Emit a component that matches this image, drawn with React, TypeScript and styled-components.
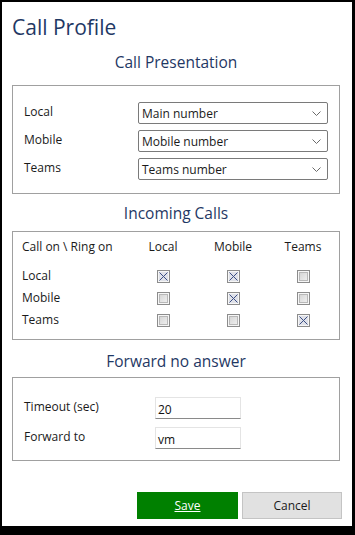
import React from "react";
import styled, { createGlobalStyle } from "styled-components";

const GlobalStyle = createGlobalStyle`
  html, body {
    margin: 0;
    padding: 0;
    background: #000000;
  }
  body {
    font-family: "Open Sans", "Noto Sans", sans-serif;
    color: #1a1a1a;
  }
`;

const Page = styled.div`
  width: 355px;
  height: 535px;
  box-sizing: border-box;
  padding: 2px 3px 9px 2px;
  background: #000000;
`;

const Window = styled.div`
  height: 100%;
  box-sizing: border-box;
  background: #ffffff;
  display: flex;
  flex-direction: column;
  padding: 0 12px 0 10px;
`;

const Title = styled.h1`
  margin: 10px 0 0 0;
  font-size: 21px;
  line-height: 30px;
  font-weight: 400;
  color: #1f3864;
`;

const SectionTitle = styled.h2<{ $top: number; $bottom: number }>`
  margin: ${(p) => p.$top}px 0 ${(p) => p.$bottom}px 0;
  font-size: 15.5px;
  line-height: 22px;
  font-weight: 400;
  text-align: center;
  color: #1f3864;
`;

const Group = styled.div<{ $pad: string }>`
  border: 1px solid #a0a0a0;
  padding: ${(p) => p.$pad};
`;

const FormGrid = styled.div<{ $label: number; $gap: number }>`
  display: grid;
  grid-template-columns: ${(p) => p.$label}px auto;
  row-gap: ${(p) => p.$gap}px;
  align-items: center;
`;

const Label = styled.span`
  font-size: 12px;
  line-height: 16px;
  margin-top: -3px;
`;

const Select = styled.div`
  height: 22px;
  box-sizing: border-box;
  border: 1px solid #7a7a7a;
  border-radius: 2px;
  display: flex;
  align-items: center;
  justify-content: space-between;
  padding: 0 6px 0 3px;
  font-size: 12px;
`;

const Chevron = () => (
  <svg width="9" height="5" viewBox="0 0 9 5">
    <path d="M0.5 0.5 L4.5 4.5 L8.5 0.5" fill="none" stroke="#6a6a6a" strokeWidth="1" />
  </svg>
);

const MatrixGrid = styled.div`
  display: grid;
  grid-template-columns: 106px 70px 70px 70px;
  grid-template-rows: 29px 22px 22px 22px;
  align-items: center;
`;

const HeadCell = styled.span<{ $center?: boolean }>`
  font-size: 12px;
  text-align: ${(p) => (p.$center ? "center" : "left")};
  align-self: start;
  line-height: 22px;
`;

const RowLabel = styled.span`
  font-size: 12px;
  margin-top: -2px;
`;

const CheckCell = styled.div`
  display: flex;
  justify-content: center;
`;

const Box = styled.span`
  width: 13px;
  height: 13px;
  box-sizing: border-box;
  border: 1px solid #8c8c8c;
  background: #f6f6f6;
  padding: 1px;
  display: block;
`;

const BoxInner = styled.span`
  display: block;
  width: 9px;
  height: 9px;
  box-sizing: border-box;
  border: 1px solid #b8b8b8;
  background: linear-gradient(135deg, #d6d6d6, #eeeeee);
`;

const Check = ({ on }: { on: boolean }) => (
  <CheckCell>
    <Box>
      {on ? (
        <svg width="9" height="9" viewBox="0 0 9 9" style={{ display: "block" }}>
          <rect x="0" y="0" width="9" height="9" fill="#dfe1e8" />
          <path d="M0.5 0.5 L8.5 8.5 M8.5 0.5 L0.5 8.5" stroke="#3c4f86" strokeWidth="1" />
        </svg>
      ) : (
        <BoxInner />
      )}
    </Box>
  </CheckCell>
);

const Input = styled.div`
  width: 86px;
  height: 22px;
  box-sizing: border-box;
  border: 1px solid #e4e4e4;
  border-bottom-color: #8a8a8a;
  display: flex;
  align-items: center;
  padding: 2px 0 0 2px;
  font-size: 12px;
  color: #111111;
`;

const Footer = styled.div`
  display: flex;
  justify-content: flex-end;
  gap: 4px;
  margin: 31px -2px 0 0;
`;

const Button = styled.button<{ $primary?: boolean }>`
  width: ${(p) => (p.$primary ? 101 : 100)}px;
  height: 27px;
  box-sizing: border-box;
  font-family: "Open Sans", "Noto Sans", sans-serif;
  font-size: 12px;
  border: 1px solid ${(p) => (p.$primary ? "#008000" : "#c4c4c4")};
  background: ${(p) => (p.$primary ? "#008000" : "#e1e1e1")};
  color: ${(p) => (p.$primary ? "#ffffff" : "#1a1a1a")};
  text-decoration: ${(p) => (p.$primary ? "underline" : "none")};
  padding: 0;
`;

const presentation = [
  { label: "Local", value: "Main number" },
  { label: "Mobile", value: "Mobile number" },
  { label: "Teams", value: "Teams number" },
];

const matrix: { label: string; ring: boolean[] }[] = [
  { label: "Local", ring: [true, true, false] },
  { label: "Mobile", ring: [false, true, false] },
  { label: "Teams", ring: [false, false, true] },
];

export default function App() {
  return (
    <Page>
      <GlobalStyle />
      <Window>
        <Title>Call Profile</Title>

        <SectionTitle $top={9} $bottom={12}>Call Presentation</SectionTitle>
        <Group $pad="16px 11px 13px 11px">
          <FormGrid $label={114} $gap={6}>
            {presentation.map((row) => (
              <React.Fragment key={row.label}>
                <Label>{row.label}</Label>
                <Select>
                  <span>{row.value}</span>
                  <Chevron />
                </Select>
              </React.Fragment>
            ))}
          </FormGrid>
        </Group>

        <SectionTitle $top={8} $bottom={7}>Incoming Calls</SectionTitle>
        <Group $pad="4px 0 8px 9px">
          <MatrixGrid>
            <HeadCell>Call on \ Ring on</HeadCell>
            <HeadCell $center>Local</HeadCell>
            <HeadCell $center>Mobile</HeadCell>
            <HeadCell $center>Teams</HeadCell>
            {matrix.map((row) => (
              <React.Fragment key={row.label}>
                <RowLabel>{row.label}</RowLabel>
                {row.ring.map((on, i) => (
                  <Check key={i} on={on} />
                ))}
              </React.Fragment>
            ))}
          </MatrixGrid>
        </Group>

        <SectionTitle $top={10} $bottom={5}>Forward no answer</SectionTitle>
        <Group $pad="19px 11px 11px 11px">
          <FormGrid $label={131} $gap={8}>
            <Label>Timeout (sec)</Label>
            <Input>20</Input>
            <Label>Forward to</Label>
            <Input>vm</Input>
          </FormGrid>
        </Group>

        <Footer>
          <Button $primary>Save</Button>
          <Button>Cancel</Button>
        </Footer>
      </Window>
    </Page>
  );
}
